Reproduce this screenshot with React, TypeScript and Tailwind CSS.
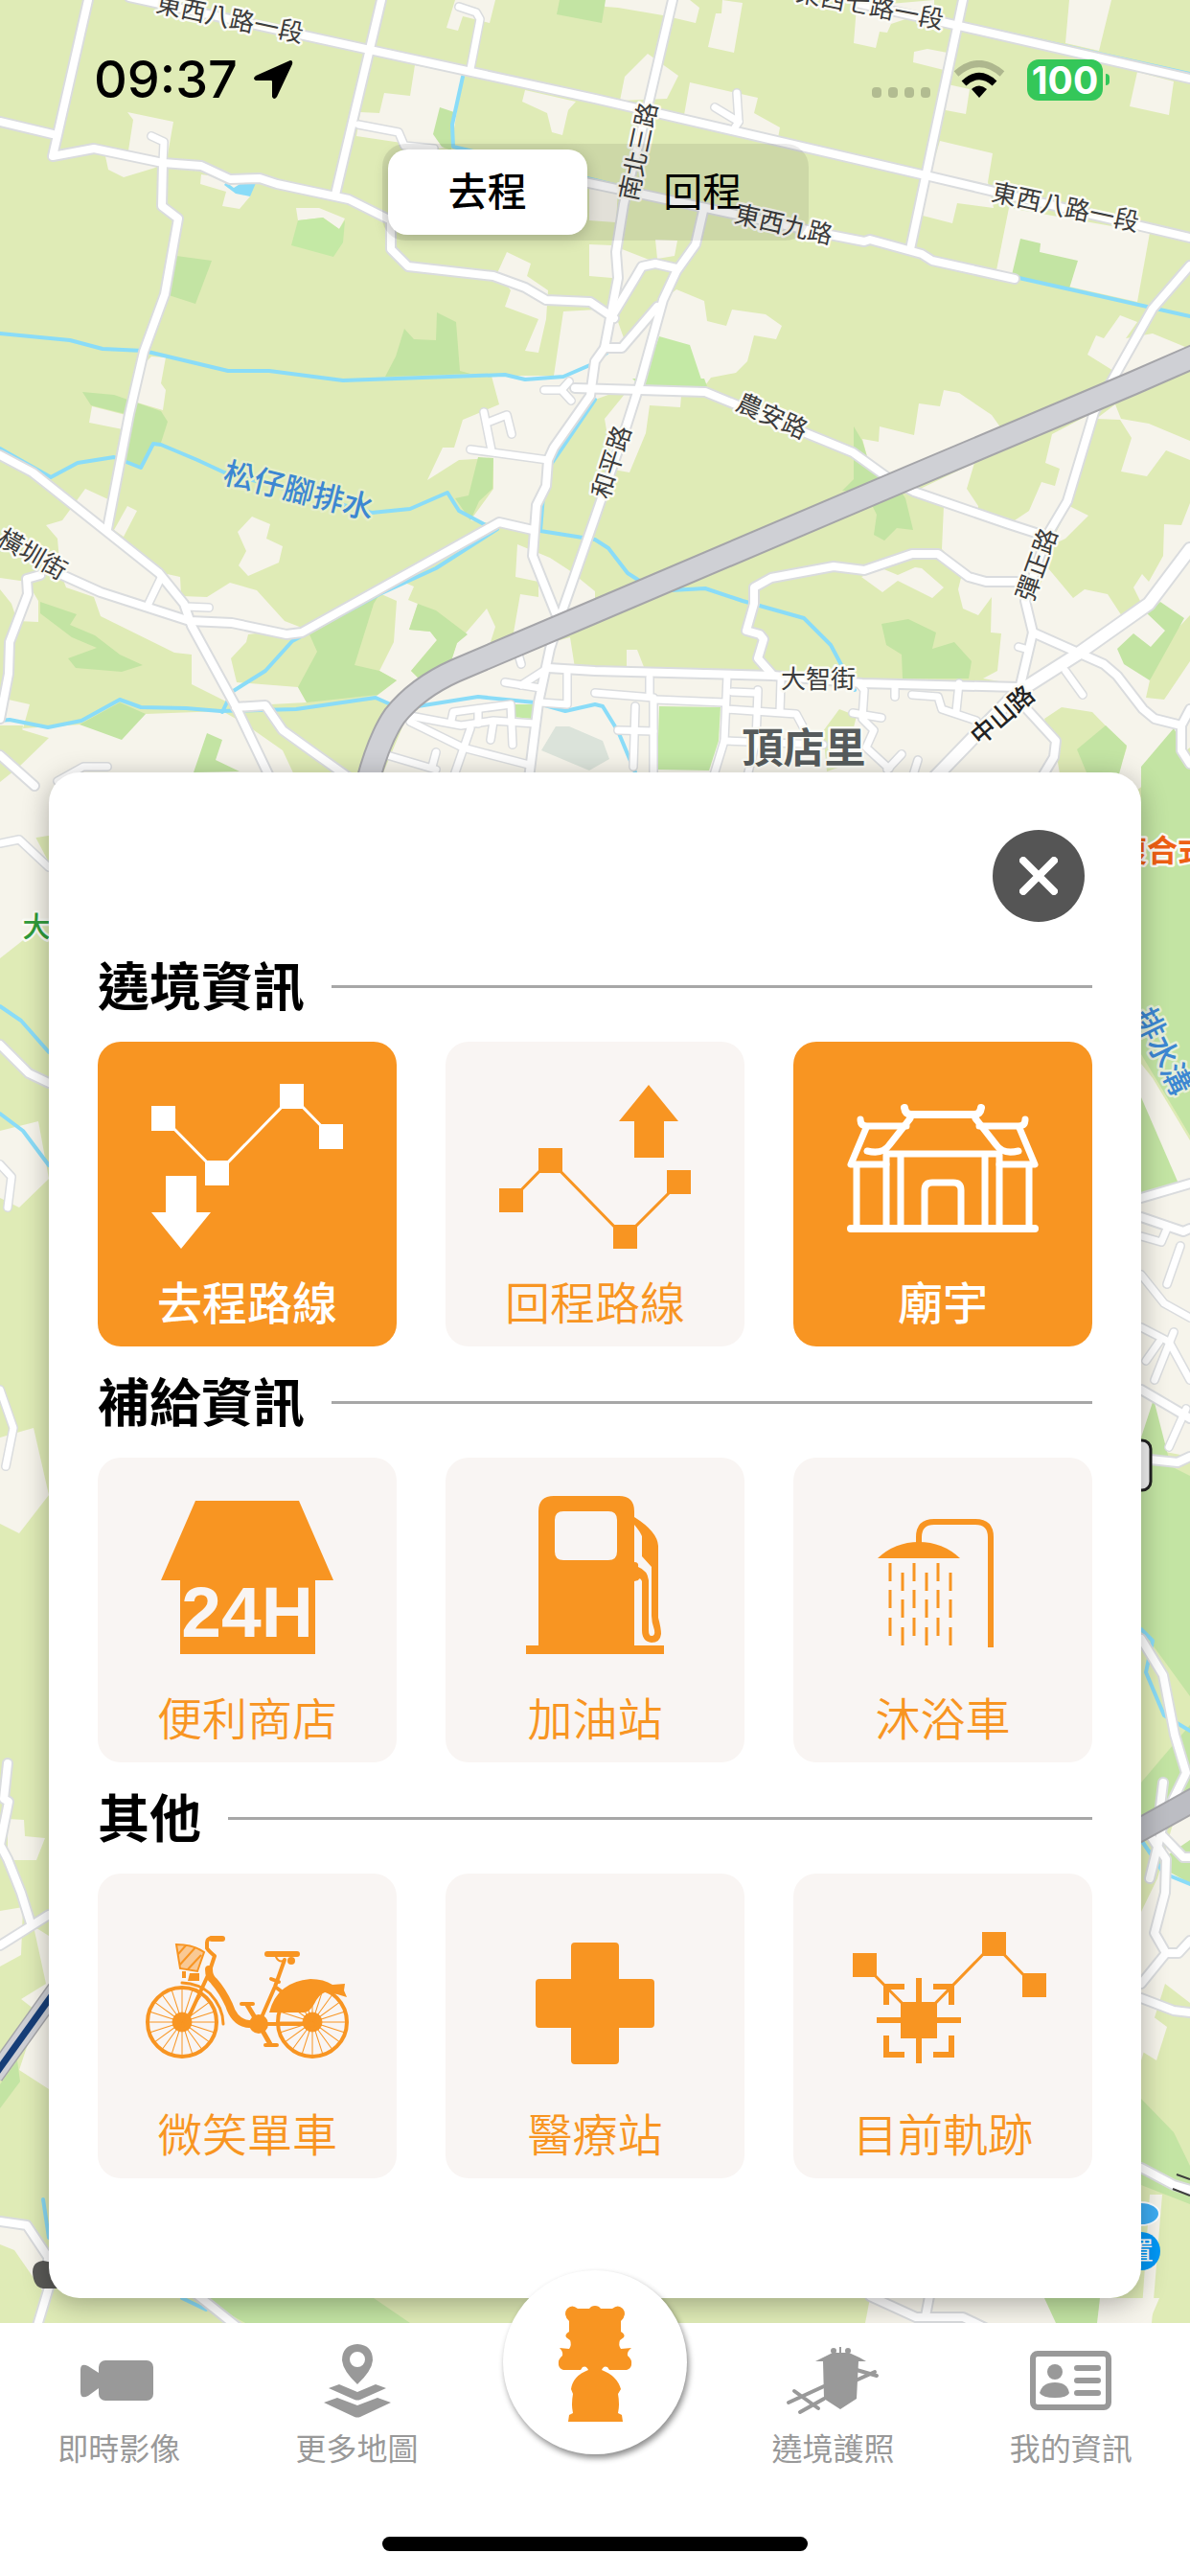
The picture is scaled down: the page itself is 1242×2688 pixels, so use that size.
import { useState, type ReactNode } from 'react';
import clsx from 'clsx';

const ORANGE = '#f89522';

/* ---------- Map data ---------- */

const LAND: { fill: string; shapes: string[] }[] = [
  {
    fill: '#f6f4eb',
    shapes: [
      '133,117 181,127 174,167 162,175 129,185 113,177 110,163 134,157 139,125',
      '210,182 263,190 261,205 250,218 232,215 236,200 209,192',
      '309,217 333,217 360,228 354,239 337,227 311,230',
      '433,68 483,78 471,153 459,155 372,142 376,117 396,118 401,97 428,100',
      '548,94 601,106 593,115 587,141 576,138 571,118 545,106',
      '475,0 517,0 511,24 483,17 478,32 466,29',
      '529,263 554,275 550,288 572,303 570,333 562,368 548,366 562,333 527,320 533,303 519,285',
      '515,400 521,422 483,438 474,467 462,467 446,501 479,480 515,478 515,510 491,543 554,552 570,483 621,417 668,400 640,322 588,325 578,392 513,392',
      '158,372 173,373 168,400 173,407 170,428 143,420 150,380',
      '96,424 131,433 128,448 93,441',
      '621,0 720,0 730,8 726,24 692,16 645,8 632,7',
      '754,0 775,3 766,55 739,49 747,14 753,14',
      '676,56 708,79 696,103 647,105 652,80',
      '720,86 791,102 787,118 814,133 812,144 714,120',
      '894,7 975,0 975,10 930,25 926,34 918,33 914,50 891,45',
      '954,54 968,51 989,55 985,73 953,65',
      '989,88 1012,93 1008,119 987,115',
      '1116,0 1160,0 1147,53 1112,45',
      '1187,75 1225,85 1220,120 1179,111',
      '981,147 1036,160 1031,190 1037,217 999,212 994,233 963,225 969,187',
      '1053,217 1200,243 1187,315 1040,282',
      '615,192 645,197 643,232 615,230',
      '615,255 639,256 680,272 640,330 639,290 615,288',
      '684,250 707,251 704,267 686,270',
      '706,302 735,314 738,335 758,340 764,323 799,328 816,340 810,354 787,350 780,377 768,389 742,394 734,405 668,402 635,402 649,365 692,313',
      '1169,329 1187,336 1175,353 1203,348 1237,362 1242,372 1175,395 1135,370 1144,350 1152,353',
      '678,423 710,425 711,413 653,410 631,437 640,490 657,493 674,452',
      '985,407 1001,410 1035,433 1047,450 946,490 930,497 906,480 900,458 917,461 918,445 954,454 959,421 981,424',
      '950,515 1017,483 1009,510 1021,528 1020,537 985,528',
      '1098,453 1091,483 1106,489 1101,507 1087,503 1074,533 1059,543 1090,560 1110,522 1142,430',
      '985,528 1053,547 1084,557 1075,610 1029,607 1011,602 983,573',
      '1003,603 1061,607 1078,660 1065,715 1026,708 1041,700 1045,661 1034,660 1035,623 1021,642 1005,635 1000,615',
      '1094,593 1120,624 1132,615 1156,620 1171,643 1193,633 1183,613 1192,599 1199,607 1214,580 1215,547 1233,548 1242,525 1242,780 1180,830 621,830 621,703 1065,714 1070,640',
      '1164,422 1170,437 1199,442 1242,460 1242,480 1217,470 1197,497 1170,492 1181,457 1169,438 1144,437',
      '1116,528 1136,538 1112,562 1095,570',
      '899,602 921,618 937,606 973,624 985,613 962,593 955,592 937,600 920,593',
      '654,678 665,678 672,696 654,696',
      '89,510 113,521 112,552 170,598 188,602 189,622 216,623 240,608 268,616 297,648 315,655 259,662 257,670 241,687 247,712 311,717 320,733 246,737 200,714 200,683 182,681 105,643 98,623 69,613 63,597 60,562 48,548 65,543',
      '133,528 143,533 129,560 119,553',
      '263,539 282,547 278,562 295,570 291,587 259,601 249,590 257,575 248,555',
      '0,603 28,607 40,627 40,649 18,648 12,630 0,615',
      '420,607 432,612 426,626 436,630 427,657 449,659 456,668 429,700 437,708 412,737 392,727 414,710 396,700 411,670 414,627 398,620',
      '508,635 517,654 511,673 471,688 477,671',
      '540,568 574,582 594,595 621,617 621,627 574,650 536,660 543,620 562,623 562,607 538,602',
      '0,728 31,735 24,760 85,756 152,745 232,742 255,755 295,783 317,830 0,880 0,800 20,785 24,757 0,757',
      '430,735 499,700 541,680 595,665 600,697 640,706 665,830 390,830',
      '0,870 30,860 51,900 51,960 0,1000',
      '0,1180 40,1170 51,1230 20,1260 0,1250',
      '0,1500 35,1490 51,1560 20,1600 0,1590',
      '8,1898 25,1899 26,1916 47,1918 38,1941 8,1941',
      '0,1994 24,1990 22,2040 0,2052',
      '35,2010 51,2020 51,2180 20,2160 40,2100 22,2086 48,2070',
      '0,2318 28,2322 51,2370 51,2400 15,2348 0,2342',
      '1191,1110 1203,1125 1242,1190 1242,1520 1191,1510',
      '1225,1900 1242,1890 1242,2090 1216,2070 1191,2150 1191,1995 1208,1960',
      '1191,2095 1218,2115 1207,2150 1191,2140',
      '1200,2290 1213,2290 1202,2424 1191,2424',
      '908,2398 1210,2398 1199,2424 903,2424',
    ],
  },
  {
    fill: '#dfebb6',
    shapes: [
      '1090,750 1108,738 1140,743 1176,780 1160,830 1110,830 1103,790',
      '1242,642 1242,690 1215,730 1196,728 1200,710 1216,670',
      '876,740 894,747 890,763 898,793 863,805 859,763',
      '18,760 51,770 20,800 0,816 0,785',
    ],
  },
  {
    fill: '#c3e4a3',
    shapes: [
      '184,267 221,272 204,317 176,308',
      '459,112 474,117 471,157 461,153 452,140',
      '584,0 632,0 628,24 581,15',
      '499,477 515,478 514,510 500,523 491,543 475,520 489,517',
      '422,343 432,354 455,355 456,326 476,336 480,387 491,390 402,393 413,372',
      '86,409 119,412 168,429 175,440 168,462 160,463 147,488 129,482 135,433 95,423',
      '1065,249 1086,254 1085,263 1125,272 1116,301 1056,287',
      '1154,757 1176,778 1162,830 1144,830 1124,782',
      '1211,628 1236,645 1200,710 1173,693 1166,677 1183,661 1201,675 1216,658 1197,640',
      '891,445 900,460 906,480 930,497 945,520 953,553 936,551 923,564 912,558 915,537 903,513 879,512 891,500',
      '920,651 948,646 977,660 973,677 996,670 1014,690 1011,708 942,708 941,683 925,673',
      '42,628 80,641 73,652 99,663 125,683 149,694 127,701 79,697 71,687 101,676 75,665 42,640',
      '396,620 390,630 370,694 396,700 414,710 394,725 320,733 311,717 331,680 323,662 348,648',
      '436,630 455,637 488,662 477,671 471,690 437,708 429,700 456,668 449,659 427,657',
      '83,756 125,733 152,745 127,772',
      '216,765 232,772 225,793 250,805 202,806',
      '1225,760 1242,790 1242,1185 1191,1100 1191,800',
      '1191,1145 1230,1235 1191,1250',
      '1191,1500 1204,1460 1222,1530 1242,1540 1242,1770 1191,1700',
      '1191,1860 1242,1800 1242,1890 1191,1900',
      '1191,2190 1225,2225 1242,2260 1242,2300 1191,2280',
      '1205,1945 1242,1920 1242,1965',
      '0,2175 18,2150 21,2172 0,2200',
      '210,2398 390,2398 428,2424 256,2424',
      '1090,2398 1148,2398 1145,2424 1102,2424',
    ],
  },
  {
    fill: '#c4e9a5',
    shapes: [
      '311,230 337,227 354,239 360,230 358,253 348,268 304,256',
      '688,351 720,360 734,402 670,402',
      '688,737 752,738 750,773 740,804 686,803',
      '535,735 556,735 556,750 535,748',
      '660,395 735,395 738,403 668,403',
    ],
  },
  { fill: '#dbe3da', shapes: ['580,758 594,758 629,773 636,792 615,804 565,783'] },
  { fill: '#8adcf8', shapes: ['236,190 244,196 252,191 267,191 261,205 246,202 234,193'] },
];

const STREAMS = [
  '0,348 73,355 107,364 150,366 238,387 281,387 358,397 527,391 548,396 588,393 618,380 640,363',
  '0,468 53,498 81,483 119,477 147,488 160,463 168,464 206,480 234,493 388,535 428,531 467,514 479,533 507,548',
  '519,552 455,593 396,620 305,669 277,700 242,722 232,743',
  '0,752 10,751 50,759 85,752 125,730 147,738 194,739 230,742 309,740 392,728 412,737 436,737 499,727 558,733 590,742 621,735 629,737 645,763 663,806',
  '483,80 472,130 473,153 621,188 641,193',
  '621,417 576,483 570,480 564,554 621,563 635,572 655,598 669,607 700,616 736,614 775,627 839,645 867,673 892,720',
  '1059,289 1242,330',
  '1007,25 1242,77',
  '0,1050 22,1065 51,1098',
  '0,1162 24,1180 51,1216',
  '1191,1700 1203,1712 1196,1745 1215,1790 1242,1806',
  '1191,1920 1215,1955 1242,1966',
  '45,2295 51,2335',
  '190,2398 215,2410',
];

const SMALL_ROADS = [
  '158,142 171,148 170,170',
  '374,130 416,138 422,152 453,155',
  '479,7 497,13 501,20 491,72',
  '769,97 771,127 767,133',
  '746,112 771,127',
  '168,603 154,632',
  '194,633 218,634',
  '505,430 513,470',
  '491,469 572,480',
  '511,440 529,433 534,453',
  '568,407 586,407 596,418',
  '594,398 586,407',
  '541,683 544,693',
  '572,697 544,715',
  '527,712 564,718',
  '592,700 592,735 564,733',
  '428,747 481,757 515,752 558,755',
  '428,753 483,780 552,798',
  '471,752 473,743 533,735 535,777',
  '515,753 512,772',
  '499,740 499,755',
  '491,760 473,812',
  '404,788 455,803',
  '455,785 451,800',
  '621,723 682,728 682,812',
  '684,730 756,733',
  '759,705 756,773 744,812',
  '678,707 678,727',
  '663,737 661,800',
  '645,762 682,763',
  '758,740 831,745 839,760',
  '791,720 789,773 780,810',
  '764,722 789,723',
  '815,710 814,743',
  '896,713 902,720 900,750 912,762 904,780 928,802',
  '890,744 920,749',
  '952,725 979,727 983,740 1019,752',
  '1001,713 998,742',
  '934,717 934,727',
  '926,803 941,787',
  '958,793 952,812',
  '756,773 859,777',
  '1063,675 1070,677',
  '1112,700 1130,725',
  '60,815 87,800 112,800',
  '0,880 20,876 51,905',
  '0,1215 12,1228 8,1260',
  '0,1450 14,1490 6,1530',
  '1191,1290 1212,1296 1218,1282',
  '1191,1330 1215,1360 1242,1375',
  '1191,1385 1220,1400 1242,1440',
  '1218,1340 1232,1300',
  '1210,1400 1196,1420',
  '1225,1390 1205,1440',
  '1220,1510 1238,1470',
];

const ROADS = [
  '0,127 55,140',
  '92,0 55,163 98,155 170,170 210,173 240,187 271,186 289,192 364,208 408,230 408,260 426,278 515,288 548,300 570,313 616,315 641,332',
  '398,0 350,203',
  '135,-3 386,52 621,103 966,183 1242,248',
  '170,170 169,215 186,228 172,307 150,367 135,432 112,552',
  '702,0 678,103 651,213 643,263 645,290 631,363 621,377 616,413 578,467 572,480 570,507 560,527 556,580 580,640',
  '1005,0 950,260',
  '894,3 1001,27 1242,82',
  '600,188 667,202 866,245 902,252 908,250 962,265 973,272 1059,291',
  '734,220 726,255 706,283 692,313 668,400 653,447 621,540 586,640 574,677 562,733 552,812',
  '637,333 663,290 670,278 684,275 706,280',
  '631,363 649,363 686,320',
  '1242,277 1203,322 1142,430 1114,523 1092,560 1070,627 1078,660 1065,715',
  '600,405 736,409 890,472 926,498 954,513 1053,547 1084,557',
  '807,705 791,687 797,667 793,662 779,658 787,630 787,613 805,603 870,591 902,595 952,578 979,578 1011,602 1029,607 1061,607',
  '572,697 621,700 807,705 900,713 1063,717',
  '1078,660 1152,693 1166,705 1193,740 1205,750 1233,757 1242,740',
  '1233,757 1233,783 1242,797',
  '1069,737 1102,773 1100,790 1085,815',
  '0,475 34,493 166,598 192,630 200,653 246,737 282,812',
  '65,600 105,618 198,648 242,650 299,662 315,660 471,573 521,545 556,553',
  '42,600 28,604 29,620 10,670 9,703 0,750',
  '246,738 277,736 295,762 327,785 365,812',
  '0,788 36,820',
  '0,1090 30,1120 51,1130',
  '8,1840 4,1877 9,1880 6,1895 0,1925 8,1940 22,1975 32,2007',
  '0,2030 51,1998',
  '0,2318 28,2322 50,2355 51,2387 38,2430',
  '1191,1250 1242,1235',
  '1191,1270 1235,1285 1242,1282',
  '1191,1450 1242,1480',
  '1191,1522 1229,1526 1242,1520',
  '1191,1710 1214,1748 1226,1810 1238,1850 1216,1895 1200,1960',
  '1214,1860 1208,1910 1235,1938 1242,1938',
  '1197,1910 1217,1940 1216,1975 1205,2017 1217,2038 1230,2038 1242,2025',
  '1217,2038 1191,2070',
  '1191,2085 1225,2098 1242,2100',
  '1191,2262 1225,2280 1242,2285',
  '200,2390 250,2430',
  '908,2396 956,2418 1005,2418 1030,2430',
  '970,2396 966,2417',
];

const MAIN_ROAD = '1242,573 1199,630 1124,683 1061,723 975,812';
const HIGHWAY = 'M1260 366 L1182 400 L950 498 L621 638 L475 700 Q435 718 412 747 Q396 770 384 815';

const LABELS = [
  { text: '東西八路一段', x: 240, y: 19, r: 12 },
  { text: '東西七路一段', x: 908, y: 6, r: 11 },
  { text: '東西八路一段', x: 1112, y: 216, r: 12 },
  { text: '東西九路', x: 818, y: 234, r: 13 },
  { text: '南北三路', x: 666, y: 158, r: -78 },
  { text: '農安路', x: 806, y: 434, r: 24 },
  { text: '和平路', x: 638, y: 482, r: -72 },
  { text: '橫圳街', x: 34, y: 578, r: 30 },
  { text: '彈正路', x: 1082, y: 589, r: -70 },
  { text: '大智街', x: 854, y: 708, r: 0 },
];

function Lines({ items, width, color }: { items: string[]; width: number; color: string }) {
  return (
    <g fill="none" stroke={color} strokeWidth={width} strokeLinecap="round" strokeLinejoin="round">
      {items.map(points => <polyline key={points} points={points} />)}
    </g>
  );
}

function MapView() {
  return (
    <svg
      className="absolute inset-0 h-full w-full"
      viewBox="0 0 1242 2688"
      preserveAspectRatio="xMidYMin slice"
      role="img"
      aria-label="地圖"
    >
      <rect width="1242" height="2688" fill="#dfebb6" />
      {LAND.map(group => (
        <g key={group.fill} fill={group.fill}>
          {group.shapes.map(points => <polygon key={points} points={points} />)}
        </g>
      ))}
      <Lines items={STREAMS} width={4} color="#8adcf8" />

      <Lines items={SMALL_ROADS} width={10} color="#dadcde" />
      <Lines items={ROADS} width={12} color="#dadcde" />
      <Lines items={[MAIN_ROAD]} width={16} color="#dadcde" />
      <Lines items={SMALL_ROADS} width={7} color="#fff" />
      <Lines items={ROADS} width={8} color="#fff" />
      <Lines items={[MAIN_ROAD]} width={12} color="#fff" />

      <g fill="none">
        <path d={HIGHWAY} stroke="#a5a5a9" strokeWidth="26" />
        <path d={HIGHWAY} stroke="#cfd0d5" strokeWidth="22" />
        <path d="M1185 1912 L1250 1876" stroke="#a5a5a9" strokeWidth="26" />
        <path d="M1185 1912 L1250 1876" stroke="#bcbdc3" strokeWidth="22" />
        <path d="M-6 2166 L60 2074" stroke="#a5a5a9" strokeWidth="20" />
        <path d="M-6 2166 L60 2074" stroke="#cfd0d5" strokeWidth="17" />
        <path d="M-6 2166 L60 2074" stroke="#163e78" strokeWidth="7" />
      </g>

      <rect x="1150" y="1503" width="51" height="52" rx="9" fill="#f2f2f2" stroke="#222" strokeWidth="3" />
      <ellipse cx="1191" cy="2310" rx="19" ry="12" fill="#3eaef4" stroke="#fff" strokeWidth="2" />
      <circle cx="1191" cy="2349" r="20" fill="#0098f7" />
      <path d="M60 2362 Q50 2360 45 2359 Q34 2360 34 2371 Q35 2387 45 2388 H62z" fill="#5a5a57" />
      <path d="M1228 2269L1242 2274M1224 2284L1242 2291" stroke="#3c3c3c" strokeWidth="2" />

      <g
        fill="#3c3c3c"
        stroke="#fbfbf5"
        strokeWidth="5"
        paintOrder="stroke"
        strokeLinejoin="round"
        textAnchor="middle"
        fontSize="26"
      >
        {LABELS.map(l => (
          <text key={`${l.text}-${l.x}`} dominantBaseline="central" transform={`translate(${l.x} ${l.y}) rotate(${l.r})`}>
            {l.text}
          </text>
        ))}
        <text dominantBaseline="central" transform="translate(1046 746) rotate(-41)" fontWeight="500" fill="#222">
          中山路
        </text>
        <text
          dominantBaseline="central"
          transform="translate(312 512) rotate(14)"
          fontSize="32"
          fontWeight="500"
          fill="#3d87d2"
          stroke="#e6efc8"
        >
          松仔腳排水
        </text>
        <text
          dominantBaseline="central"
          transform="translate(1214 1097) rotate(64)"
          fontSize="32"
          fontWeight="500"
          fill="#3d87d2"
          stroke="#e6efd8"
        >
          排水溝
        </text>
        <text x="839" y="796" fontSize="43" fontWeight="700" fill="#565b5c">頂店里</text>
        <text x="1213" y="899" fontSize="32" fontWeight="700" fill="#ee6014">複合式</text>
        <text x="38" y="978" fontSize="29" fontWeight="500" fill="#2f9b3a">大</text>
        <text x="1191" y="2358" fontSize="26" fill="#fff" stroke="none">置</text>
      </g>
    </svg>
  );
}

/* ---------- Status bar ---------- */

function StatusBar() {
  return (
    <div className="flex h-[54px] items-center pr-[84px] pl-[98px] text-black">
      <span className="text-[54px] leading-none font-medium">09:37</span>
      <svg className="ml-4 h-[42px] w-[42px]" viewBox="0 0 42 42" aria-hidden="true">
        <path d="M39 1 Q42 1 41 5 L25 39 Q22 43 20 39 V23 Q20 22 19 22 H3 Q-1 20 3 17 Z" />
      </svg>
      <div className="ml-auto flex gap-[7px] pt-[26px]">
        {[0, 1, 2, 3].map(i => <span key={i} className="h-[11px] w-[10px] rounded-[4px] bg-black/20" />)}
      </div>
      <svg className="ml-6 h-[40px] w-[54px]" viewBox="0 0 54 40" fill="none" stroke="#000" strokeWidth="7" aria-hidden="true">
        <path d="M3 14 Q27 -7 51 14" opacity=".22" />
        <path d="M11 24 Q27 9 43 24" />
        <path d="M27 39 L19 30 Q27 23 35 30Z" fill="#000" stroke="none" />
      </svg>
      <div className="ml-[23px] flex items-center gap-[3px]">
        <span className="flex h-[43px] w-[79px] items-center justify-center rounded-xl bg-[#34c759] text-[39px] leading-none font-bold text-white">
          100
        </span>
        <span className="h-3 w-1 rounded-r-full bg-[#34c759]" />
      </div>
    </div>
  );
}

/* ---------- Card icons, all drawn on a 312 x 244 board ---------- */

const OutboundIcon = (
  <>
    <path d="M69 80 L125 137 L203 57 L244 99" fill="none" stroke="currentColor" strokeWidth="3" />
    <path d="M56 67h25v26h-25z M112 124h25v26h-25z M190 44h25v26h-25z M231 86h25v26h-25z" />
    <path d="M71 140h32v38h15L87 216 56 178h15z" />
  </>
);

const ReturnIcon = (
  <>
    <path d="M68 166 L109 124 L187 204 L244 147" fill="none" stroke="currentColor" strokeWidth="3" />
    <path d="M56 153h25v25h-25z M97 111h25v26h-25z M175 191h25v25h-25z M231 134h25v25h-25z" />
    <path d="M212 45 L243 83 H228 V121 H197 V83 H181z" />
  </>
);

const TempleIcon = (
  <g fill="none" stroke="currentColor" strokeWidth="7" strokeLinecap="round" strokeLinejoin="round">
    <path d="M116 69 Q117 76 123 76 H189 Q195 76 196 69" strokeWidth="8" />
    <path d="M122 80 L100 108 Q93 118 77 114 M190 80 L212 108 Q219 118 235 114" />
    <path d="M98 117 H214" />
    <path d="M70 81 Q70 88 77 88 H118 M242 81 Q242 88 235 88 H194" />
    <path d="M76 90 L60 128 H97 M236 90 L252 128 H215" />
    <path d="M66 129V194 M97 118V194 M112 118V194 M200 118V194 M215 118V194 M246 129V194" />
    <path d="M60 195 H252" strokeWidth="8" />
    <path d="M137 194 V155 Q137 147 145 147 H167 Q175 147 175 155 V194" />
  </g>
);

const StoreIcon = (
  <>
    <path d="M102 45H210L246 128H227V205H86V128H66z" />
    <text
      x="156"
      y="187"
      textAnchor="middle"
      fontSize="75"
      fontWeight="700"
      fill="#f9f5f3"
      className="font-['Liberation_Sans',sans-serif]"
    >
      24H
    </text>
  </>
);

const GasIcon = (
  <>
    <path
      fillRule="evenodd"
      d="M84 196H97V56Q97 40 113 40H181Q197 40 197 56V196H228V205H84z M123 56Q114 56 114 65V98Q114 107 123 107H170Q179 107 179 98V65Q179 56 170 56z"
    />
    <path d="M197 62Q221 77 222 92V167Q225 178 225 184Q224 193 215 193Q205 192 205 180V129Q203 124 201 128L197 129V109Q202 109 201 114Q211 118 212 128V180Q212 186 215 186Q219 186 218 180Q215 172 215 165V114L205 103V82Q203 77 197 70z" />
  </>
);

const DROP_COLUMNS = [101, 114, 126, 139, 151, 164];

const ShowerIcon = (
  <>
    <path d="M131 92V83Q131 67 147 67H190Q206 67 206 83V198" fill="none" stroke="currentColor" strokeWidth="6" />
    <path d="M88 105Q106 88 131 88T174 105z" />
    {DROP_COLUMNS.map((x, i) => (
      <path
        key={x}
        d={`M${x} ${i % 2 ? 120 : 110}v19m0 9v19m0 10v19`}
        stroke="currentColor"
        strokeWidth="3"
      />
    ))}
  </>
);

function Wheel({ cx }: { cx: number }) {
  return (
    <g stroke="currentColor">
      <circle cx={cx} cy="155" r="36" fill="none" strokeWidth="4" />
      <circle cx={cx} cy="155" r="10" />
      {Array.from({ length: 20 }, (_, i) => (
        <line key={i} x1={cx} y1="155" x2={cx} y2="120" strokeWidth="1" transform={`rotate(${i * 18} ${cx} 155)`} />
      ))}
    </g>
  );
}

const BikeIcon = (
  <>
    <Wheel cx={88} />
    <Wheel cx={224} />
    <g fill="none" stroke="currentColor" strokeLinecap="round" strokeLinejoin="round">
      <path d="M130 68H119" strokeWidth="6" />
      <path d="M119 67Q114 68 114 72V78Q116 81 122 86L116 104L94 152" strokeWidth="4" />
      <path d="M116 100Q116 108 121 112Q130 122 137 137Q143 156 158 157H168" strokeWidth="8" />
      <path d="M168 157H224" strokeWidth="4" />
      <path d="M171 150L185 118L195 90M181 110l8 3M185 118l8 6" strokeWidth="4" />
      <path d="M156 137L168 157L180 178" strokeWidth="5" />
      <path d="M150 136h12M175 179h12" strokeWidth="4" />
      <path d="M88 114Q106 115 117 125Q131 140 131 157" strokeWidth="3" />
      <path d="M177 84H208" strokeWidth="6" />
      <path d="M186 87q3 6 8 4" strokeWidth="2" />
    </g>
    <circle cx="202" cy="91" r="4" />
    <circle cx="168" cy="157" r="10" />
    <path d="M179 145Q187 113 222 110Q236 110 245 116L258 115L257 122L260 129L250 126L237 124Q231 126 226 136Q221 145 215 145z" />
    <path d="M82 74Q100 74 111 82L104 102L86 99z" opacity=".45" />
    <path d="M82 74Q100 74 111 82L104 102L86 99zM84 84l8-9M85 96l17-19M94 100l14-15" fill="none" stroke="currentColor" strokeWidth="2" />
    <path d="M88 102h4v7h-4z M96 104h10v8h-12z" />
  </>
);

const MedicalIcon = (
  <path d="M135 72H177Q181 72 181 76V110H214Q218 110 218 114V157Q218 161 214 161H181V195Q181 199 177 199H135Q131 199 131 195V161H98Q94 161 94 157V114Q94 110 98 110H131V76Q131 72 135 72z" />
);

const TrackIcon = (
  <>
    <path d="M75 96L131 153L209 73L251 117" fill="none" stroke="currentColor" strokeWidth="3" />
    <path d="M62 83h25v25h-25z M197 61h25v25h-25z M239 104h25v25h-25z M112 134h38v38h-38z" />
    <path
      d="M131 109V198M87 153H175M97 137V118H116M146 118H165V137M97 169V189H116M146 189H165V169"
      fill="none"
      stroke="currentColor"
      strokeWidth="6"
    />
  </>
);

/* ---------- Panel ---------- */

type Layer = { id: string; label: string; icon: ReactNode };

const SECTIONS: { title: string; layers: Layer[] }[] = [
  {
    title: '遶境資訊',
    layers: [
      { id: 'outbound', label: '去程路線', icon: OutboundIcon },
      { id: 'return', label: '回程路線', icon: ReturnIcon },
      { id: 'temple', label: '廟宇', icon: TempleIcon },
    ],
  },
  {
    title: '補給資訊',
    layers: [
      { id: 'store', label: '便利商店', icon: StoreIcon },
      { id: 'gas', label: '加油站', icon: GasIcon },
      { id: 'shower', label: '沐浴車', icon: ShowerIcon },
    ],
  },
  {
    title: '其他',
    layers: [
      { id: 'bike', label: '微笑單車', icon: BikeIcon },
      { id: 'medical', label: '醫療站', icon: MedicalIcon },
      { id: 'track', label: '目前軌跡', icon: TrackIcon },
    ],
  },
];

function LayerCard({ layer, active, onClick }: { layer: Layer; active: boolean; onClick: () => void }) {
  return (
    <button
      type="button"
      aria-pressed={active}
      onClick={onClick}
      className={clsx(
        'flex h-[318px] flex-col items-center rounded-3xl',
        active ? 'bg-[#f89522] font-medium text-white' : 'bg-[#f9f5f3] font-[350] text-[#f89522]',
      )}
    >
      <svg className="h-[244px] w-[312px] max-w-full" viewBox="0 0 312 244" fill="currentColor" aria-hidden="true">
        {layer.icon}
      </svg>
      <span className="text-[47px] leading-[58px]">{layer.label}</span>
    </button>
  );
}

function LayerPanel({ onClose }: { onClose: () => void }) {
  const [active, setActive] = useState<string[]>(['outbound', 'temple']);

  const toggle = (id: string) =>
    setActive(list => (list.includes(id) ? list.filter(x => x !== id) : [...list, id]));

  return (
    <section className="mx-[51px] flex flex-col rounded-[32px] bg-white px-[51px] pt-[60px] pb-[125px] shadow-[0_6px_28px_rgba(0,0,0,0.3)]">
      <button
        type="button"
        aria-label="關閉"
        onClick={onClose}
        className="mr-2 mb-[9px] flex h-24 w-24 items-center justify-center self-end rounded-full bg-[#555]"
      >
        <svg className="h-10 w-10" viewBox="0 0 40 40" stroke="#fff" strokeWidth="8" strokeLinecap="round" aria-hidden="true">
          <path d="M4 4L36 36M36 4L4 36" />
        </svg>
      </button>

      {SECTIONS.map(section => (
        <div key={section.title} className="mt-[26px]">
          <div className="flex h-16 items-center gap-7">
            <h2 className="pt-1 text-[54px] leading-[64px] font-bold text-black">{section.title}</h2>
            <div className="h-[3px] flex-1 bg-[#a7a7a7]" />
          </div>
          <div className="mt-[26px] grid grid-cols-3 gap-[51px]">
            {section.layers.map(layer => (
              <LayerCard
                key={layer.id}
                layer={layer}
                active={active.includes(layer.id)}
                onClick={() => toggle(layer.id)}
              />
            ))}
          </div>
        </div>
      ))}
    </section>
  );
}

/* ---------- Bottom navigation ---------- */

const CameraIcon = (
  <>
    <rect x="29" y="19" width="57" height="42" rx="7" />
    <path d="M29 32L18 25Q10 21 10 29V52Q10 60 18 56L29 48z" />
  </>
);

const MapLayersIcon = (
  <>
    <path fillRule="evenodd" d="M50 2Q66 3 66 19Q65 30 50 44Q35 30 34 19Q34 3 50 2zM50 10a8 8 0 1 0 0 16a8 8 0 1 0 0-16z" />
    <path d="M20 48L31 44L50 52L69 44L80 48L53 60Q50 61 47 60z" />
    <path d="M15 63L29 58L50 66L71 58L85 63L53 78Q50 79 47 78z" />
  </>
);

const PalanquinIcon = (
  <>
    <path d="M32 20L40 16L50 11H67L78 16L85 20H77L75 59L58 70L41 59L40 20z" />
    <circle cx="51" cy="9" r="3" />
    <circle cx="66" cy="9" r="3" />
    <path d="M58 12V5" stroke="currentColor" strokeWidth="2" />
    <path
      d="M4 63L41 46M16 73L41 59M10 51L35 69M74 40L94 31M75 29L96 35"
      fill="none"
      stroke="currentColor"
      strokeWidth="4"
      strokeLinecap="round"
    />
  </>
);

const IdCardIcon = (
  <>
    <rect x="10" y="12" width="79" height="56" rx="5" fill="none" stroke="currentColor" strokeWidth="6" />
    <circle cx="33" cy="31" r="8" />
    <path d="M17 53Q20 42 33 42T48 53Q46 58 33 58T17 53z" />
    <path d="M56 27H78M56 40H78M56 53H78" stroke="currentColor" strokeWidth="6" strokeLinecap="round" />
  </>
);

function NavItem({ label, icon }: { label: string; icon: ReactNode }) {
  return (
    <a href="#" className="flex flex-1 flex-col items-center gap-3 text-[#999]">
      <svg className="h-20 w-[100px]" viewBox="0 0 100 80" fill="currentColor" aria-hidden="true">
        {icon}
      </svg>
      <span className="text-[32px] leading-10">{label}</span>
    </a>
  );
}

function BottomNav() {
  return (
    <nav className="relative bg-white pt-5 pb-[26px]">
      <div className="flex">
        <NavItem label="即時影像" icon={CameraIcon} />
        <NavItem label="更多地圖" icon={MapLayersIcon} />
        <div className="relative flex-1">
          {/* Sits half above the bar */}
          <a
            href="#"
            aria-label="首頁"
            className="absolute -top-[75px] left-1/2 h-48 w-48 -translate-x-1/2 rounded-full bg-white shadow-[2px_4px_6px_rgba(0,0,0,0.45)]"
          >
            <svg className="h-full w-full" viewBox="0 0 192 192" fill={ORANGE} aria-hidden="true">
              <path d="M96 37Q92 37 90 40H78Q72 35 67 40Q62 46 69 53V64Q64 67 66 70L70 73Q72 78 69 82L59 81Q63 85 62 89Q57 93 58 99Q59 103 63 104H81L83 101Q87 99 89 104Q73 110 71 124L73 129Q71 140 73 149L69 151L68 158H125L124 151L120 149Q122 140 120 129L123 124Q119 110 103 104Q105 99 109 101L111 104H129Q133 103 134 99Q135 93 130 89Q129 85 134 81L123 82Q120 78 122 73L126 70Q128 67 123 64V53Q130 46 125 40Q120 35 114 40H102Q100 37 96 37z" />
            </svg>
          </a>
        </div>
        <NavItem label="遶境護照" icon={PalanquinIcon} />
        <NavItem label="我的資訊" icon={IdCardIcon} />
      </div>
      <div className="mx-auto mt-[71px] h-[15px] w-[444px] rounded-full bg-black" />
    </nav>
  );
}

/* ---------- Page ---------- */

const DIRECTIONS = ['去程', '回程'];

export default function App() {
  const [direction, setDirection] = useState('去程');
  const [open, setOpen] = useState(true);

  return (
    <div
      lang="zh-Hant"
      className="relative flex min-h-screen flex-col overflow-hidden font-['Inter','Noto_Sans_CJK_TC',sans-serif]"
    >
      <MapView />

      <header className="relative pt-14">
        <StatusBar />
        <div className="mx-auto mt-10 grid w-[445px] grid-cols-2 gap-4 rounded-3xl bg-black/8 p-[6px]">
          {DIRECTIONS.map(d => (
            <button
              key={d}
              type="button"
              aria-pressed={d === direction}
              onClick={() => setDirection(d)}
              className={clsx(
                'h-[89px] rounded-[20px] text-[41px] text-black',
                d === direction && 'bg-white font-medium shadow-[0_4px_16px_rgba(0,0,0,0.2)]',
              )}
            >
              {d}
            </button>
          ))}
        </div>
      </header>

      <main className="relative flex flex-1 flex-col justify-end pb-[26px]">
        {open && <LayerPanel onClose={() => setOpen(false)} />}
      </main>

      <BottomNav />
    </div>
  );
}
